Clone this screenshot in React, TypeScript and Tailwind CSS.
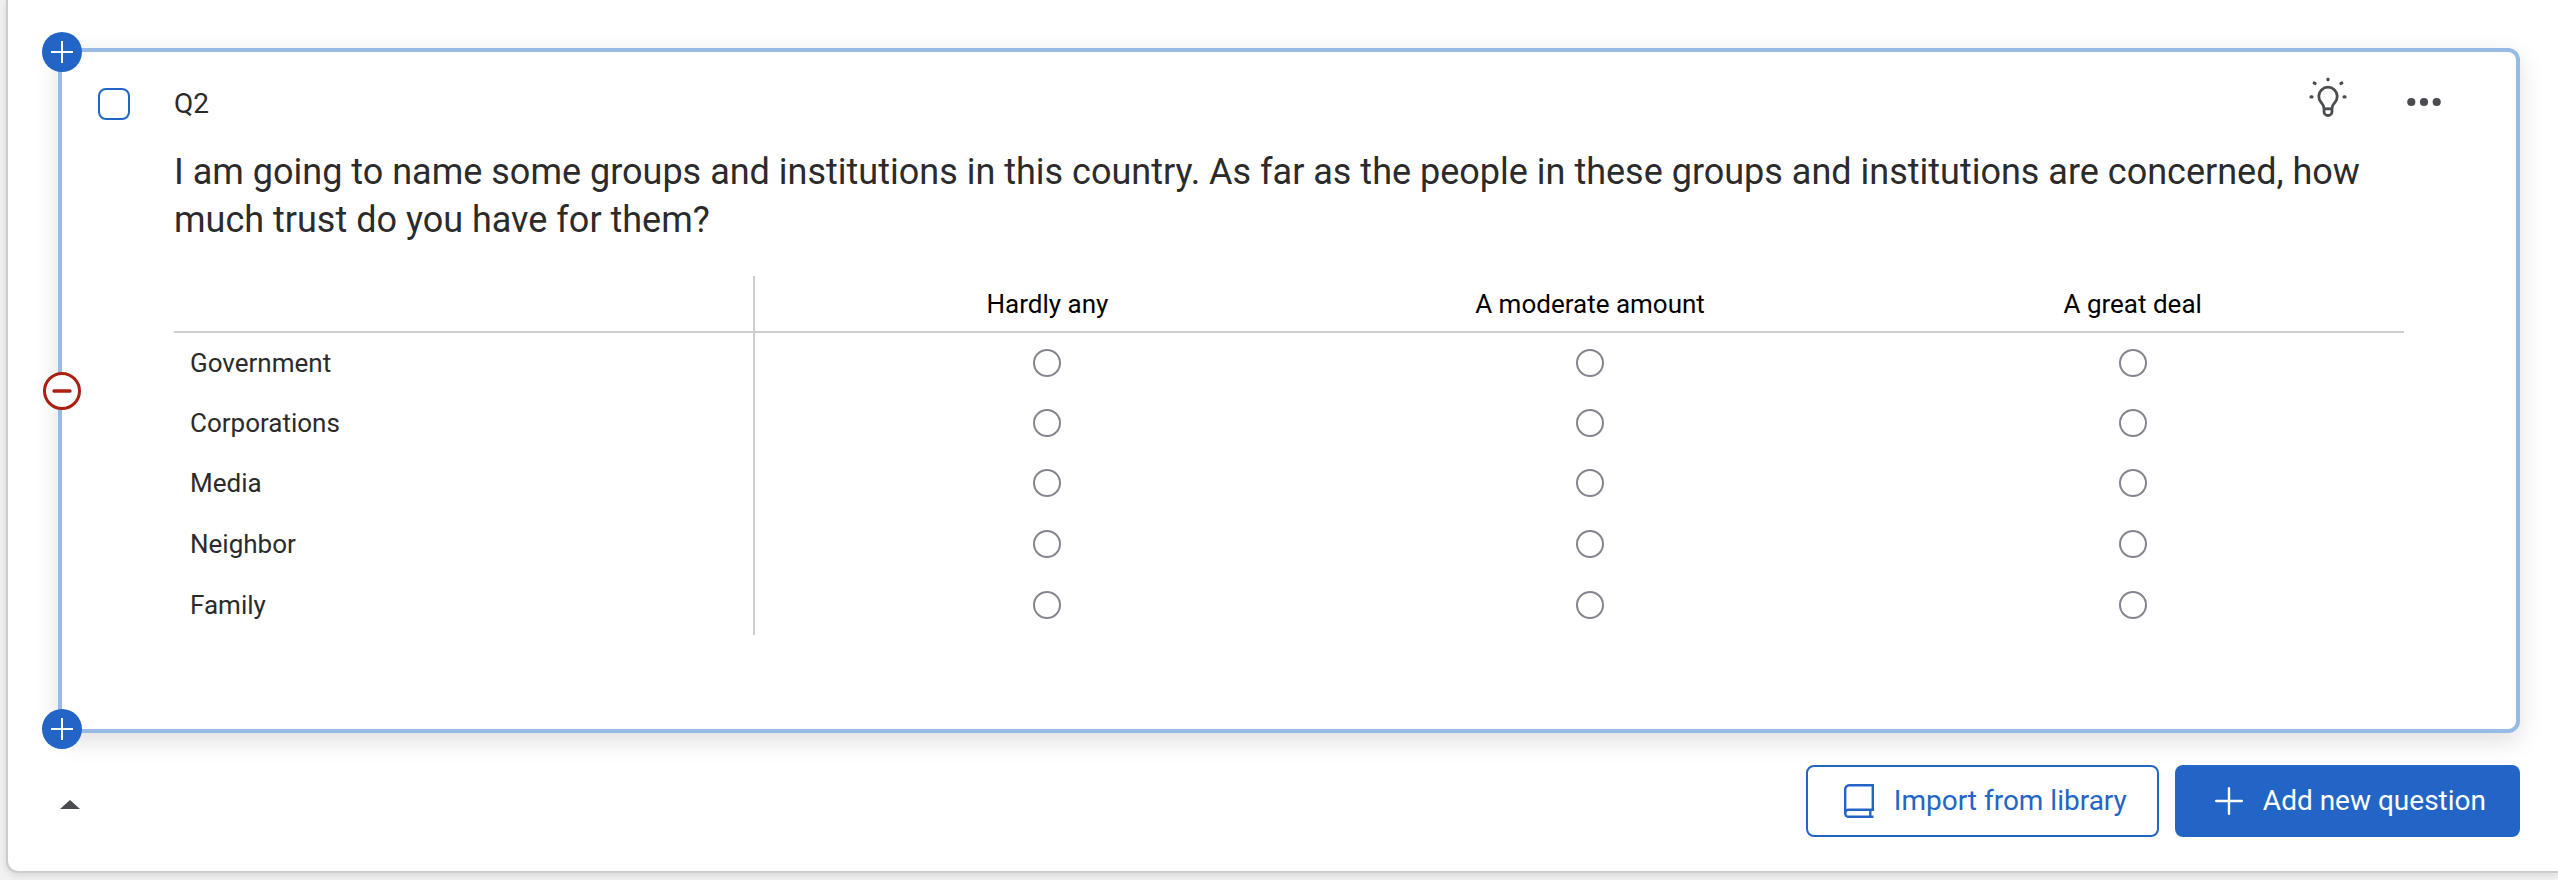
import { useState } from "react";

const CHOICES = ["Hardly any", "A moderate amount", "A great deal"];
const STATEMENTS = ["Government", "Corporations", "Media", "Neighbor", "Family"];

function BulbIcon() {
  return (
    <svg viewBox="0 0 44 44" className="size-11" fill="none" stroke="currentColor" strokeWidth="2.8" strokeLinecap="round" strokeLinejoin="round" aria-hidden="true">
      <path d="M18 35.500v-3.200c0-3-1.400-4.200-3-6a9.200 9.200 0 1 1 14 0c-1.600 1.800-3 3-3 6v3.200a4 4 0 0 1-8 0z" />
      <path d="M18 32.800h8" strokeLinecap="butt" />
      <path d="M22 3v.8M8.200 6.900l.9.700M35.800 6.900l-.9.700M5 20.900h1M38 20.900h1" strokeWidth="3.2" />
    </svg>
  );
}

function DotsIcon() {
  return (
    <svg viewBox="0 0 44 44" className="size-11" fill="currentColor" aria-hidden="true">
      <circle cx="9.300" cy="26" r="4.100" />
      <circle cx="22" cy="26" r="4.100" />
      <circle cx="34.700" cy="26" r="4.100" />
    </svg>
  );
}

function BookIcon() {
  return (
    <svg viewBox="0 0 30 34" className="h-[34px] w-[30px]" fill="none" stroke="currentColor" strokeWidth="2.400" aria-hidden="true">
      <path d="M29.500 32.800H4.500a3.300 3.300 0 0 1-3.300-3.300V5.200a4 4 0 0 1 4-4h23.600v24.600H4.800a3.600 3.600 0 0 0-3.600 3.600" />
      <path d="M26.300 26v6.500" />
    </svg>
  );
}

function PlusIcon() {
  return (
    <svg viewBox="0 0 28 28" className="size-7" stroke="currentColor" strokeWidth="2.400" strokeLinecap="round" aria-hidden="true">
      <path d="M14 1.200v25.600M1.200 14h25.600" />
    </svg>
  );
}

function InsertButton({ label, className }: { label: string; className: string }) {
  return (
    <button type="button" aria-label={label} className={`absolute left-[-20px] flex size-10 items-center justify-center rounded-full bg-[#2365c6] text-white ${className}`}>
      <svg viewBox="0 0 22 22" className="size-[22px]" stroke="currentColor" strokeWidth="2" aria-hidden="true">
        <path d="M11 0v22M0 11h22" />
      </svg>
    </button>
  );
}

function TrustMatrix() {
  const [answers, setAnswers] = useState<Record<string, string>>({});
  return (
    <table className="mt-8 h-[359px] w-full table-fixed border-collapse text-[26px] leading-8">
      <thead>
        <tr className="border-b-2 border-[#cdcdcd]">
          <td className="h-[55px] w-[27%] p-0">
            <div className="mr-[21px] h-[55px] border-r-2 border-[#cdcdcd]" />
          </td>
          {CHOICES.map((choice) => (
            <th key={choice} scope="col" className="p-0 font-normal text-black">
              {choice}
            </th>
          ))}
        </tr>
      </thead>
      <tbody>
        {STATEMENTS.map((statement) => (
          <tr key={statement} className="h-[60px]">
            <th scope="row" className="h-[60px] p-0 text-left font-normal">
              <div className="mr-[21px] flex h-full items-center border-r-2 border-[#cdcdcd] pl-4">{statement}</div>
            </th>
            {CHOICES.map((choice) => (
              <td key={choice} className="p-0">
                <input
                  type="radio"
                  name={statement}
                  aria-label={`${statement}: ${choice}`}
                  checked={answers[statement] === choice}
                  onChange={() => setAnswers({ ...answers, [statement]: choice })}
                  className="mx-auto block size-7 appearance-none rounded-full border-2 border-[#85858f] bg-white checked:border-8 checked:border-[#2365c6]"
                />
              </td>
            ))}
          </tr>
        ))}
      </tbody>
    </table>
  );
}

export default function App() {
  return (
    <div className="overflow-hidden bg-[#f2f2f2] pb-[7px] pl-1.5 font-['Roboto','Liberation_Sans',sans-serif] text-[#2b2b2b]">
      <main className="rounded-bl-xl border-b-2 border-l-2 border-[#cccccc] bg-white pr-[38px] pb-[34px] pl-[50px] pt-12 shadow-[0_2px_8px_rgba(0,0,0,0.12)]">
        <section className="relative rounded-xl border-4 border-[#98bbe6] bg-white pb-[94px] pt-6 shadow-[0_8px_24px_rgba(0,0,0,0.13)]">
          <InsertButton label="Insert question above" className="top-[-20px]" />
          <button type="button" aria-label="Remove question" className="absolute left-[-19px] top-1/2 flex size-[38px] -translate-y-1/2 items-center justify-center rounded-full border-3 border-[#ab2010] bg-white text-[#ab2010]">
            <svg viewBox="0 0 20 4" className="h-1 w-5" stroke="currentColor" strokeWidth="3.400" strokeLinecap="round" aria-hidden="true">
              <path d="M2 2h16" />
            </svg>
          </button>
          <InsertButton label="Insert question below" className="bottom-[-20px]" />

          <div className="flex h-14 items-center pl-9 pr-[70px]">
            <input type="checkbox" id="select-q2" className="size-8 appearance-none rounded-lg border-2 border-[#2365c6] bg-white checked:bg-[#2365c6]" />
            <label htmlFor="select-q2" className="pl-11 text-[28px] leading-8">
              Q2
            </label>
            <div className="ml-auto flex gap-[52px] self-start text-[#4a4c4f]">
              <button type="button" aria-label="Suggestions">
                <BulbIcon />
              </button>
              <button type="button" aria-label="More options">
                <DotsIcon />
              </button>
            </div>
          </div>

          <div className="mt-4 pl-28 pr-28">
            <h2 className="text-[36px] leading-12">
              I am going to name some groups and institutions in this country. As far as the people in these groups and institutions are concerned, how much trust do you have for them?
            </h2>
            <TrustMatrix />
          </div>
        </section>

        <div className="flex items-center justify-end gap-4 pt-8">
          <button type="button" aria-label="Collapse block" className="mr-auto pl-0.5 pt-1.5 text-[#4a4c4f]">
            <svg viewBox="0 0 20 9" className="h-[9px] w-5" fill="currentColor" aria-hidden="true">
              <path d="M0 9 10 0l10 9z" />
            </svg>
          </button>
          <button type="button" className="flex h-[72px] items-center gap-5 rounded-lg border-2 border-[#2365c6] bg-white pl-9 pr-[30px] text-[28px] text-[#2365c6]">
            <BookIcon />
            Import from library
          </button>
          <button type="button" className="flex h-[72px] items-center gap-5 rounded-lg bg-[#2365c6] pl-10 pr-[34px] text-[28px] text-white">
            <PlusIcon />
            Add new question
          </button>
        </div>
      </main>
    </div>
  );
}
